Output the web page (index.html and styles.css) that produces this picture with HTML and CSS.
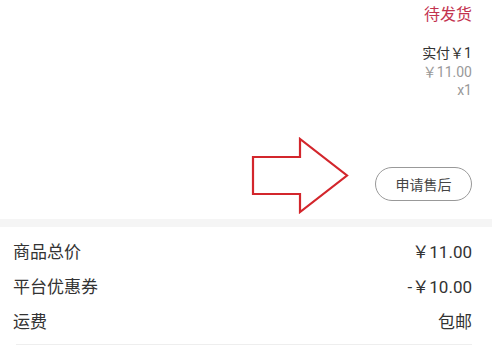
FILE: index.html
```html
<!DOCTYPE html>
<html lang="zh-CN">
<head>
  <meta charset="UTF-8" />
  <meta name="viewport" content="width=device-width, initial-scale=1.0" />
  <title>订单详情</title>
  <link rel="stylesheet" href="styles.css">
</head>

<body>

  <div class="order">
    <div class="goods">
      <div class="status">待发货</div>
      <div class="pay">实付￥1</div>
      <div class="orig">￥11.00</div>
      <div class="qty">x1</div>

      <div class="actions">
        <svg class="arrow" width="100" height="80" viewBox="0 0 100 80">
          <polygon points="3,21 50,21 50,3 97,39.5 50,76 50,58 3,58" fill="#fff" stroke="#d3262c" stroke-width="2.2" stroke-linejoin="miter" />
        </svg>
        <button class="after-sale-btn">申请售后</button>
      </div>
    </div>

    <div class="band"></div>

    <div class="summary">
      <div class="row">
        <span>商品总价</span>
        <span>￥11.00</span>
      </div>
      <div class="row">
        <span>平台优惠券</span>
        <span>-￥10.00</span>
      </div>
      <div class="row">
        <span>运费</span>
        <span>包邮</span>
      </div>
      <div class="divider"></div>
    </div>
  </div>

</body>
</html>
```

FILE: styles.css
```css
body {
  margin: 0;
  padding: 0;
  background: #fff;
  font-family: Roboto, 'Noto Sans CJK SC', sans-serif;
  color: #333;
}

.order {
  width: 492px;
}

.goods {
  height: 219px;
  box-sizing: border-box;
  padding: 4px 20px 3px 0;
  display: flex;
  flex-direction: column;
  align-items: flex-end;
}

.status {
  font-size: 16px;
  line-height: 22px;
  color: #c3334f;
}

.pay {
  margin-top: 17px;
  font-size: 14px;
  line-height: 20px;
  color: #333;
}

.orig,
.qty {
  font-size: 14px;
  line-height: 18px;
  color: #999;
}

.actions {
  margin-top: auto;
  display: flex;
  align-items: flex-end;
  gap: 25px;
}

.arrow {
  display: block;
}

.after-sale-btn {
  width: 97px;
  height: 34px;
  margin-bottom: 15px;
  border: 1px solid #999;
  border-radius: 17px;
  background: #fff;
  color: #444;
  font-family: inherit;
  font-size: 14px;
  padding: 0;
}

.band {
  height: 8px;
  background: #f5f5f5;
}

.summary {
  padding: 6px 20px 0 13px;
}

.row {
  display: flex;
  justify-content: space-between;
  align-items: center;
  height: 35px;
  font-size: 17px;
  color: #333;
}

.divider {
  margin: 6px 0 0 3px;
  height: 1px;
  background: #eee;
}
```
